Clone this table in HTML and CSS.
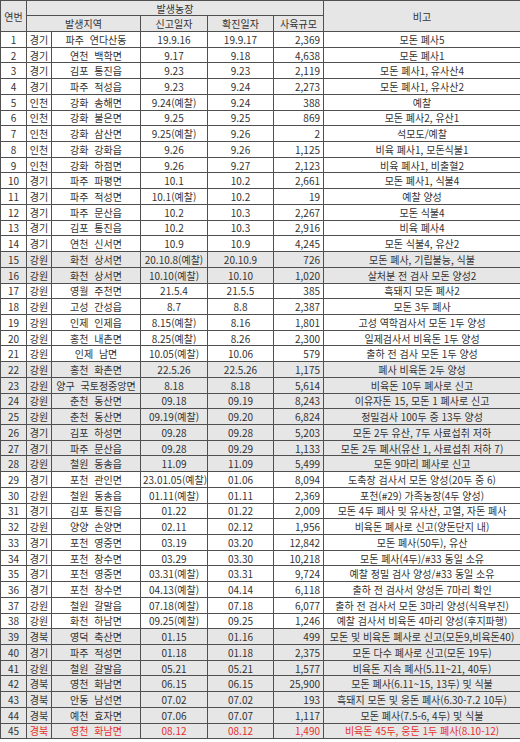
FILE: index.html
```html
<!DOCTYPE html>
<html lang="ko">
<head>
<meta charset="utf-8">
<title>ASF 발생농장</title>
<link rel="stylesheet" href="styles.css">
</head>
<body>
<table class="tbl">
<colgroup>
<col class="c-no"><col class="c-prov"><col class="c-loc"><col class="c-date"><col class="c-date2"><col class="c-size"><col class="c-note">
</colgroup>
<thead>
<tr class="h1"><th rowspan="2">연번</th><th colspan="5">발생농장</th><th rowspan="2">비고</th></tr>
<tr class="h2"><th colspan="2">발생지역</th><th>신고일자</th><th>확진일자</th><th>사육규모</th></tr>
</thead>
<tbody>
<tr><td>1</td><td>경기</td><td class="loc">파주 연다산동</td><td>19.9.16</td><td>19.9.17</td><td class="num">2,369</td><td>모돈 폐사5</td></tr>
<tr><td>2</td><td>경기</td><td class="loc">연천 백학면</td><td>9.17</td><td>9.18</td><td class="num">4,638</td><td>모돈 폐사1</td></tr>
<tr><td>3</td><td>경기</td><td class="loc">김포 통진읍</td><td>9.23</td><td>9.23</td><td class="num">2,119</td><td>모돈 폐사1, 유사산4</td></tr>
<tr><td>4</td><td>경기</td><td class="loc">파주 적성읍</td><td>9.23</td><td>9.24</td><td class="num">2,273</td><td>모돈 폐사1, 유사산2</td></tr>
<tr><td>5</td><td>인천</td><td class="loc">강화 송해면</td><td>9.24(예찰)</td><td>9.24</td><td class="num">388</td><td>예찰</td></tr>
<tr><td>6</td><td>인천</td><td class="loc">강화 불은면</td><td>9.25</td><td>9.25</td><td class="num">869</td><td>모돈 폐사2, 유산1</td></tr>
<tr><td>7</td><td>인천</td><td class="loc">강화 삼산면</td><td>9.25(예찰)</td><td>9.26</td><td class="num">2</td><td>석모도/예찰</td></tr>
<tr><td>8</td><td>인천</td><td class="loc">강화 강화읍</td><td>9.26</td><td>9.26</td><td class="num">1,125</td><td>비육 폐사1, 모돈식불1</td></tr>
<tr><td>9</td><td>인천</td><td class="loc">강화 하점면</td><td>9.26</td><td>9.27</td><td class="num">2,123</td><td>비육 폐사1, 비출혈2</td></tr>
<tr><td>10</td><td>경기</td><td class="loc">파주 파평면</td><td>10.1</td><td>10.2</td><td class="num">2,661</td><td>모돈 폐사1, 식불4</td></tr>
<tr><td>11</td><td>경기</td><td class="loc">파주 적성면</td><td>10.1(예찰)</td><td>10.2</td><td class="num">19</td><td>예찰 양성</td></tr>
<tr><td>12</td><td>경기</td><td class="loc">파주 문산읍</td><td>10.2</td><td>10.3</td><td class="num">2,267</td><td>모돈 식불4</td></tr>
<tr><td>13</td><td>경기</td><td class="loc">김포 통진읍</td><td>10.2</td><td>10.3</td><td class="num">2,916</td><td>비육 폐사4</td></tr>
<tr><td>14</td><td>경기</td><td class="loc">연천 신서면</td><td>10.9</td><td>10.9</td><td class="num">4,245</td><td>모돈 식불4, 유산2</td></tr>
<tr class="g"><td>15</td><td>강원</td><td class="loc">화천 상서면</td><td>20.10.8(예찰)</td><td>20.10.9</td><td class="num">726</td><td>모돈 폐사, 기립불능, 식불</td></tr>
<tr class="g"><td>16</td><td>강원</td><td class="loc">화천 상서면</td><td>10.10(예찰)</td><td>10.10</td><td class="num">1,020</td><td>살처분 전 검사 모돈 양성2</td></tr>
<tr><td>17</td><td>강원</td><td class="loc">영월 주천면</td><td>21.5.4</td><td>21.5.5</td><td class="num">385</td><td>흑돼지 모돈 폐사2</td></tr>
<tr><td>18</td><td>강원</td><td class="loc">고성 간성읍</td><td>8.7</td><td>8.8</td><td class="num">2,387</td><td>모돈 3두 폐사</td></tr>
<tr><td>19</td><td>강원</td><td class="loc">인제 인제읍</td><td>8.15(예찰)</td><td>8.16</td><td class="num">1,801</td><td>고성 역학검사서 모돈 1두 양성</td></tr>
<tr><td>20</td><td>강원</td><td class="loc">홍천 내촌면</td><td>8.25(예찰)</td><td>8.26</td><td class="num">2,300</td><td>일제검사서 비육돈 1두 양성</td></tr>
<tr><td>21</td><td>강원</td><td class="loc">인제 남면</td><td>10.05(예찰)</td><td>10.06</td><td class="num">579</td><td>출하 전 검사 모돈 1두 양성</td></tr>
<tr class="g"><td>22</td><td>강원</td><td class="loc">홍천 화촌면</td><td>22.5.26</td><td>22.5.26</td><td class="num">1,175</td><td>폐사 비육돈 2두 양성</td></tr>
<tr class="g"><td>23</td><td>강원</td><td class="loc">양구 국토정중앙면</td><td>8.18</td><td>8.18</td><td class="num">5,614</td><td>비육돈 10두 폐사로 신고</td></tr>
<tr class="g"><td>24</td><td>강원</td><td class="loc">춘천 동산면</td><td>09.18</td><td>09.19</td><td class="num">8,243</td><td>이유자돈 15, 모돈 1 폐사로 신고</td></tr>
<tr class="g"><td>25</td><td>강원</td><td class="loc">춘천 동산면</td><td>09.19(예찰)</td><td>09.20</td><td class="num">6,824</td><td>정밀검사 100두 중 13두 양성</td></tr>
<tr class="g"><td>26</td><td>경기</td><td class="loc">김포 하성면</td><td>09.28</td><td>09.28</td><td class="num">5,203</td><td>모돈 2두 유산, 7두 사료섭취 저하</td></tr>
<tr class="g"><td>27</td><td>경기</td><td class="loc">파주 문산읍</td><td>09.28</td><td>09.29</td><td class="num">1,133</td><td>모돈 2두 폐사(유산 1, 사료섭취 저하 7)</td></tr>
<tr class="g"><td>28</td><td>강원</td><td class="loc">철원 동송읍</td><td>11.09</td><td>11.09</td><td class="num">5,499</td><td>모돈 9마리 폐사로 신고</td></tr>
<tr><td>29</td><td>경기</td><td class="loc">포천 관인면</td><td>23.01.05(예찰)</td><td>01.06</td><td class="num">8,094</td><td>도축장 검사서 모돈 양성(20두 중 6)</td></tr>
<tr><td>30</td><td>강원</td><td class="loc">철원 동송읍</td><td>01.11(예찰)</td><td>01.11</td><td class="num">2,369</td><td>포천(#29) 가족농장(4두 양성)</td></tr>
<tr><td>31</td><td>경기</td><td class="loc">김포 통진읍</td><td>01.22</td><td>01.22</td><td class="num">2,009</td><td>모돈 4두 폐사 및 유사산, 고열, 자돈 폐사</td></tr>
<tr><td>32</td><td>강원</td><td class="loc">양양 손양면</td><td>02.11</td><td>02.12</td><td class="num">1,956</td><td>비육돈 폐사로 신고(양돈단지 내)</td></tr>
<tr><td>33</td><td>경기</td><td class="loc">포천 영중면</td><td>03.19</td><td>03.20</td><td class="num">12,842</td><td>모돈 폐사(50두), 유산</td></tr>
<tr><td>34</td><td>경기</td><td class="loc">포천 창수면</td><td>03.29</td><td>03.30</td><td class="num">10,218</td><td>모돈 폐사(4두)/#33 동일 소유</td></tr>
<tr><td>35</td><td>경기</td><td class="loc">포천 영중면</td><td>03.31(예찰)</td><td>03.31</td><td class="num">9,724</td><td>예찰 정밀 검사 양성/#33 동일 소유</td></tr>
<tr><td>36</td><td>경기</td><td class="loc">포천 창수면</td><td>04.13(예찰)</td><td>04.14</td><td class="num">6,118</td><td>출하 전 검사서 양성돈 7마리 확인</td></tr>
<tr><td>37</td><td>강원</td><td class="loc">철원 갈말읍</td><td>07.18(예찰)</td><td>07.18</td><td class="num">6,077</td><td>출하 전 검사서 모돈 3마리 양성(식욕부진)</td></tr>
<tr><td>38</td><td>강원</td><td class="loc">화천 하남면</td><td>09.25(예찰)</td><td>09.25</td><td class="num">1,246</td><td>예찰 검사서 비육돈 4마리 양성(후지파행)</td></tr>
<tr class="g"><td>39</td><td>경북</td><td class="loc">영덕 축산면</td><td>01.15</td><td>01.16</td><td class="num">499</td><td>모돈 및 비육돈 폐사로 신고(모돈9,비육돈40)</td></tr>
<tr class="g"><td>40</td><td>경기</td><td class="loc">파주 적성면</td><td>01.18</td><td>01.18</td><td class="num">2,375</td><td>모돈 다수 폐사로 신고(모돈 19두)</td></tr>
<tr class="g"><td>41</td><td>강원</td><td class="loc">철원 갈말읍</td><td>05.21</td><td>05.21</td><td class="num">1,577</td><td>비육돈 지속 폐사(5.11~21, 40두)</td></tr>
<tr class="g"><td>42</td><td>경북</td><td class="loc">영천 화남면</td><td>06.15</td><td>06.15</td><td class="num">25,900</td><td>모돈 폐사(6.11~15, 13두) 및 식불</td></tr>
<tr class="g"><td>43</td><td>경북</td><td class="loc">안동 남선면</td><td>07.02</td><td>07.02</td><td class="num">193</td><td>흑돼지 모돈 및 웅돈 폐사(6.30-7.2 10두)</td></tr>
<tr class="g"><td>44</td><td>경북</td><td class="loc">예천 효자면</td><td>07.06</td><td>07.07</td><td class="num">1,117</td><td>모돈 폐사(7.5-6, 4두) 및 식불</td></tr>
<tr class="g r"><td>45</td><td>경북</td><td class="loc">영천 화남면</td><td>08.12</td><td>08.12</td><td class="num">1,490</td><td>비육돈 45두, 웅돈 1두 폐사(8.10-12)</td></tr>
</tbody>
</table>
</body>
</html>
```

FILE: styles.css
```css
html, body {
  margin: 0;
  padding: 0;
  background: #ffffff;
}

.tbl {
  width: 520px;
  border-collapse: collapse;
  table-layout: fixed;
  font-family: "Noto Sans CJK KR", "Noto Sans", sans-serif;
  font-size: 10px;
  color: #333333;
}

.c-no { width: 26px; }
.c-prov { width: 25px; }
.c-loc { width: 89px; }
.c-date { width: 67px; }
.c-date2 { width: 66px; }
.c-size { width: 50px; }
.c-note { width: 197px; }

.tbl th,
.tbl td {
  border: 1px solid #505050;
  padding: 0 2px;
  text-align: center;
  white-space: nowrap;
  overflow: hidden;
  line-height: 13px;
}

.tbl th {
  font-weight: normal;
  background: #e6e6e6;
}

.h1 { height: 15px; }
.h2 { height: 16px; }

.tbl tbody tr { height: 15.73px; }

.tbl td.loc { word-spacing: 3px; }
.tbl td.num { text-align: right; padding-right: 3px; }

.tbl tr.g td { background: #e6e6e6; }

.tbl tr.r td { color: #e8302e; }
.tbl tr.r td:first-child { color: #333333; }
```
